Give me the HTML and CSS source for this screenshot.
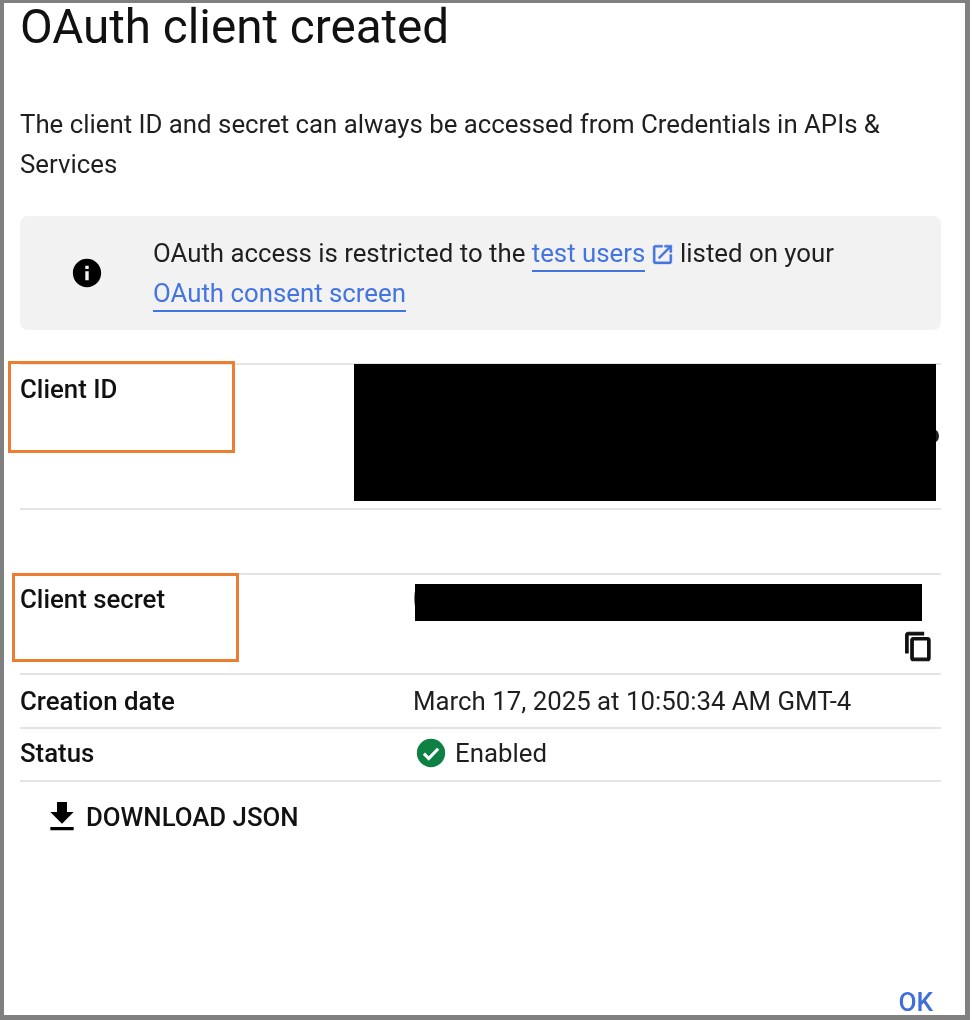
FILE: index.html
```html
<!DOCTYPE html>
<html lang="en">
<head>
<meta charset="UTF-8">
<meta name="viewport" content="width=device-width, initial-scale=1.0">
<title>OAuth client created</title>
<link rel="stylesheet" href="styles.css">
</head>
<body>

<div class="frame">
    <h1 class="title soft">OAuth client created</h1>
    <p class="intro soft">The client ID and secret can always be accessed from Credentials in APIs &amp; Services</p>

    <div class="notice">
        <div class="notice-icon soft">
            <svg width="34" height="34" viewBox="0 0 24 24"><path fill="#000" d="M12 2C6.48 2 2 6.48 2 12s4.48 10 10 10 10-4.48 10-10S17.52 2 12 2zm1.2 15.2h-2.4v-6.4h2.4v6.4zm0-8h-2.4V6.8h2.4v2.4z"/></svg>
        </div>
        <div class="notice-text soft">
            OAuth access is restricted to the <a class="link" href="#">test users</a>
            <svg class="ext-icon" width="25" height="25" viewBox="0 0 24 24"><path fill="#4374e0" stroke="#4374e0" stroke-width=".4" d="M19 19H5V5h7V3H5c-1.11 0-2 .9-2 2v14c0 1.1.89 2 2 2h14c1.1 0 2-.9 2-2v-7h-2v7zM14 3v2h3.59l-9.83 9.83 1.41 1.41L19 6.41V10h2V3h-7z"/></svg>
            listed on your<br>
            <a class="link" href="#">OAuth consent screen</a>
        </div>
    </div>

    <div class="row row-id">
        <div class="label soft">Client ID</div>
        <div class="value"></div>
        <span class="peek peek-id"></span>
        <div class="redact redact-id"></div>
        <div class="callout callout-id"></div>
    </div>

    <div class="row row-secret">
        <div class="label soft">Client secret</div>
        <div class="value soft">
            <svg class="copy-icon" width="31" height="31" viewBox="0 0 24 24"><path fill="#111" stroke="#111" stroke-width=".8" d="M16 1H4c-1.1 0-2 .9-2 2v14h2V3h12V1zm3 4H8c-1.1 0-2 .9-2 2v14c0 1.1.9 2 2 2h11c1.1 0 2-.9 2-2V7c0-1.1-.9-2-2-2zm0 16H8V7h11v14z"/></svg>
        </div>
        <span class="peek peek-secret"></span>
        <div class="redact redact-secret"></div>
        <div class="callout callout-secret"></div>
    </div>

    <div class="row row-date">
        <div class="label soft">Creation date</div>
        <div class="value soft">March 17, 2025 at 10:50:34 AM GMT-4</div>
    </div>

    <div class="row row-status">
        <div class="label soft">Status</div>
        <div class="value status soft">
            <svg width="34" height="34" viewBox="0 0 24 24"><circle cx="12" cy="12" r="10" fill="#0f8043"/><path fill="none" stroke="#fff" stroke-width="2.2" d="M7 12.5l3.4 3.4L17 9"/></svg>
            Enabled
        </div>
    </div>

    <div class="download soft">
        <svg width="40" height="40" viewBox="0 0 24 24"><path fill="#000" d="M19 9h-4V3H9v6H5l7 7 7-7zM5 18v2h14v-2H5z"/></svg>
        DOWNLOAD JSON
    </div>

    <div class="actions">
        <span class="ok soft">OK</span>
    </div>
</div>

</body>
</html>
```
FILE: styles.css
```css
* {
    box-sizing: border-box;
}

body {
    margin: 0;
    padding: 0;
    background: #fff;
    font-family: Roboto, "Liberation Sans", sans-serif;
    color: #1f1f1f;
}

/* the source picture is an upscaled capture, text is a bit soft */
.soft {
    filter: blur(0.4px);
}

.frame {
    width: 970px;
    height: 1020px;
    border-style: solid;
    border-color: #808080;
    border-width: 3px 5px 5px 4px;
    background: #fff;
    padding: 0 24px 0 16px;
    display: flex;
    flex-direction: column;
}

.title {
    margin: 0;
    font-size: 47.6px;
    font-weight: 400;
    line-height: 48px;
    color: #111;
}

.intro {
    margin: 53px 0 0;
    font-size: 25.8px;
    line-height: 40px;
}

.notice {
    margin-top: 32px;
    height: 114px;
    flex: none;
    display: flex;
    align-items: center;
    background: #f2f2f2;
    border-radius: 8px;
}

.notice-icon {
    width: 133px;
    display: flex;
    justify-content: center;
}

.notice-text {
    font-size: 25.8px;
    line-height: 40px;
}

.link {
    color: #4374e0;
    text-decoration: none;
    border-bottom: 2px solid #4374e0;
    padding-bottom: 2px;
}

.ext-icon {
    vertical-align: -5px;
    margin: 0 -1px 0 -2px;
}

.row {
    position: relative;
    flex: none;
    display: grid;
    grid-template-columns: 393px 1fr;
    border-top: 2px solid #e4e4e4;
    font-size: 25.8px;
    line-height: 30px;
}

.row-id {
    margin-top: 33px;
    height: 147px;
    padding-top: 9px;
    border-bottom: 2px solid #e4e4e4;
}

.row-secret {
    margin-top: 63px;
    height: 100px;
    padding-top: 9px;
}

.row-date {
    height: 54px;
    padding-top: 11px;
}

.row-status {
    height: 55px;
    padding-top: 9px;
    border-bottom: 2px solid #e4e4e4;
}

.label {
    font-weight: 500;
    color: #111;
}

.value {
    position: relative;
}

.status {
    display: flex;
    align-items: center;
    gap: 7px;
    height: 30px;
    padding-left: 1px;
}

.copy-icon {
    position: absolute;
    right: 7px;
    top: 47px;
}

.peek {
    position: absolute;
    border-radius: 50%;
    background: #222;
}

.peek-id {
    right: 2px;
    top: 64px;
    width: 12px;
    height: 14px;
}

.peek-secret {
    left: 394px;
    top: 15px;
    width: 4px;
    height: 17px;
    background: #777;
}

.redact {
    position: absolute;
    background: #000;
}

.redact-id {
    left: 334px;
    top: -1px;
    width: 582px;
    height: 137px;
}

.redact-secret {
    left: 395px;
    top: 9px;
    width: 507px;
    height: 37px;
}

.callout {
    position: absolute;
    border: 3px solid #ed7d31;
}

.callout-id {
    left: -12px;
    top: -4px;
    width: 227px;
    height: 92px;
}

.callout-secret {
    left: -8px;
    top: -2px;
    width: 227px;
    height: 89px;
}

.download {
    margin: 15px 0 0 22px;
    display: flex;
    align-items: center;
    gap: 4px;
    font-size: 25.8px;
    font-weight: 500;
    line-height: 40px;
    color: #111;
}

.actions {
    margin-top: auto;
    display: flex;
    justify-content: flex-end;
    padding-right: 8px;
}

.ok {
    font-size: 26.2px;
    font-weight: 500;
    line-height: 26px;
    color: #3f6fd8;
}
```
